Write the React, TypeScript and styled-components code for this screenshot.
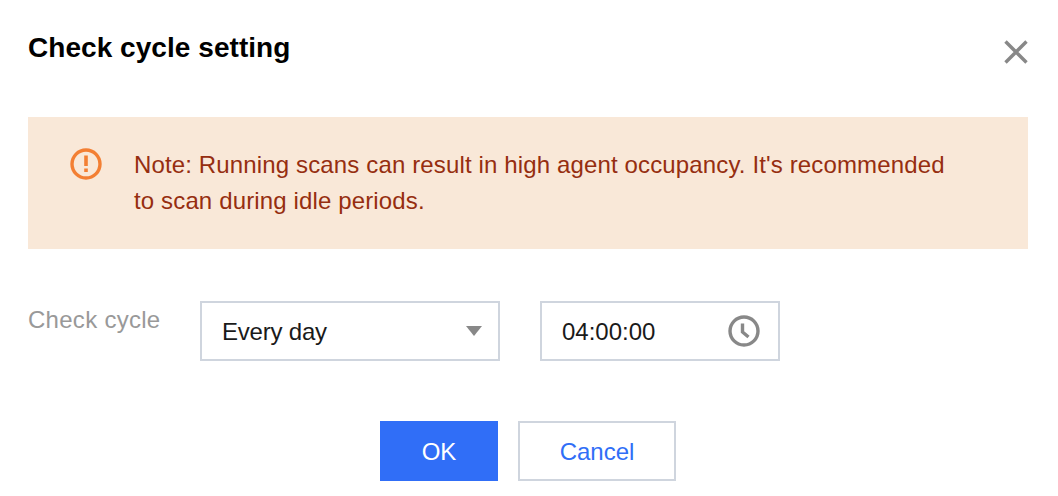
import React from "react";
import styled, { createGlobalStyle } from "styled-components";

const GlobalStyle = createGlobalStyle`
  html, body {
    margin: 0;
    padding: 0;
    background: #fff;
    font-family: "Liberation Sans", Arial, sans-serif;
  }
`;

const Dialog = styled.div`
  box-sizing: border-box;
  width: 1058px;
  height: 496px;
  padding: 0 30px 0 28px;
  overflow: hidden;
`;

const Header = styled.div`
  display: flex;
  justify-content: space-between;
  height: 117px;
  padding-top: 30px;
  box-sizing: border-box;
`;

const Title = styled.h2`
  margin: 0;
  font-size: 28px;
  line-height: 36px;
  font-weight: 700;
  letter-spacing: 0.05px;
  color: #000;
`;

const CloseButton = styled.button`
  width: 24px;
  height: 24px;
  margin-top: 10px;
  padding: 0;
  border: 0;
  background: none;
  color: #888;
`;

const Alert = styled.div`
  display: flex;
  box-sizing: border-box;
  height: 132px;
  padding: 30px 80px 0 41px;
  background: #f9e8d8;
  color: #962e10;
  font-size: 24px;
  line-height: 36px;
  letter-spacing: 0.14px;
`;

const AlertIcon = styled.svg`
  flex: none;
  width: 34px;
  height: 34px;
  margin-right: 31px;
`;

const FormRow = styled.div`
  display: flex;
  margin-top: 52px;
`;

const Label = styled.label`
  width: 172px;
  padding-top: 1px;
  font-size: 24px;
  line-height: 36px;
  letter-spacing: 0.28px;
  color: #999;
`;

const Field = styled.div<{ $width: number }>`
  display: flex;
  align-items: center;
  justify-content: space-between;
  box-sizing: border-box;
  width: ${({ $width }) => $width}px;
  height: 60px;
  margin-right: 40px;
  padding: 1px 17px 0 20px;
  border: 2px solid #cfd5de;
  font-size: 24px;
  color: #1a1a1a;
`;

const SelectValue = styled.span`
  letter-spacing: -0.2px;
`;

const Caret = styled.span`
  width: 0;
  height: 0;
  margin: -2px -1px 0 0;
  border-left: 8px solid transparent;
  border-right: 8px solid transparent;
  border-top: 10px solid #888;
`;

const ClockIcon = styled.svg`
  margin-top: -1px;
`;

const Actions = styled.div`
  display: flex;
  justify-content: center;
  gap: 20px;
  margin-top: 60px;
`;

const Button = styled.button<{ $primary?: boolean; $width: number }>`
  box-sizing: border-box;
  width: ${({ $width }) => $width}px;
  height: 60px;
  padding: 2px 0 0;
  border: 2px solid ${({ $primary }) => ($primary ? "#306ef7" : "#cfd5de")};
  background: ${({ $primary }) => ($primary ? "#306ef7" : "#fff")};
  color: ${({ $primary }) => ($primary ? "#fff" : "#306ef7")};
  font-family: inherit;
  font-size: 24px;
`;

const App: React.FC = () => (
  <>
    <GlobalStyle />
    <Dialog>
      <Header>
        <Title>Check cycle setting</Title>
        <CloseButton aria-label="Close">
          <svg width="24" height="24" viewBox="0 0 24 24" fill="none" stroke="currentColor" strokeWidth="3.4">
            <path d="M1.5 1.5 22.5 22.5M22.5 1.5 1.5 22.5" />
          </svg>
        </CloseButton>
      </Header>
      <Alert>
        <AlertIcon viewBox="0 0 34 34" fill="none">
          <circle cx="17" cy="17" r="14" stroke="#f37f33" strokeWidth="3.4" />
          <path d="M15.2 8.5h3.6v10.5h-3.6zM15.2 21.5h3.6v3.6h-3.6z" fill="#f37f33" />
        </AlertIcon>
        <div>Note: Running scans can result in high agent occupancy. It's recommended to scan during idle periods.</div>
      </Alert>
      <FormRow>
        <Label>Check cycle</Label>
        <Field $width={300}>
          <SelectValue>Every day</SelectValue>
          <Caret />
        </Field>
        <Field $width={240}>
          04:00:00
          <ClockIcon width="34" height="34" viewBox="0 0 34 34" fill="none" stroke="#888" strokeWidth="3.4">
            <circle cx="17" cy="17" r="14" />
            <path d="M15.5 9.5v8.5l6 5" />
          </ClockIcon>
        </Field>
      </FormRow>
      <Actions>
        <Button $primary $width={118}>OK</Button>
        <Button $width={158}>Cancel</Button>
      </Actions>
    </Dialog>
  </>
);

export default App;
